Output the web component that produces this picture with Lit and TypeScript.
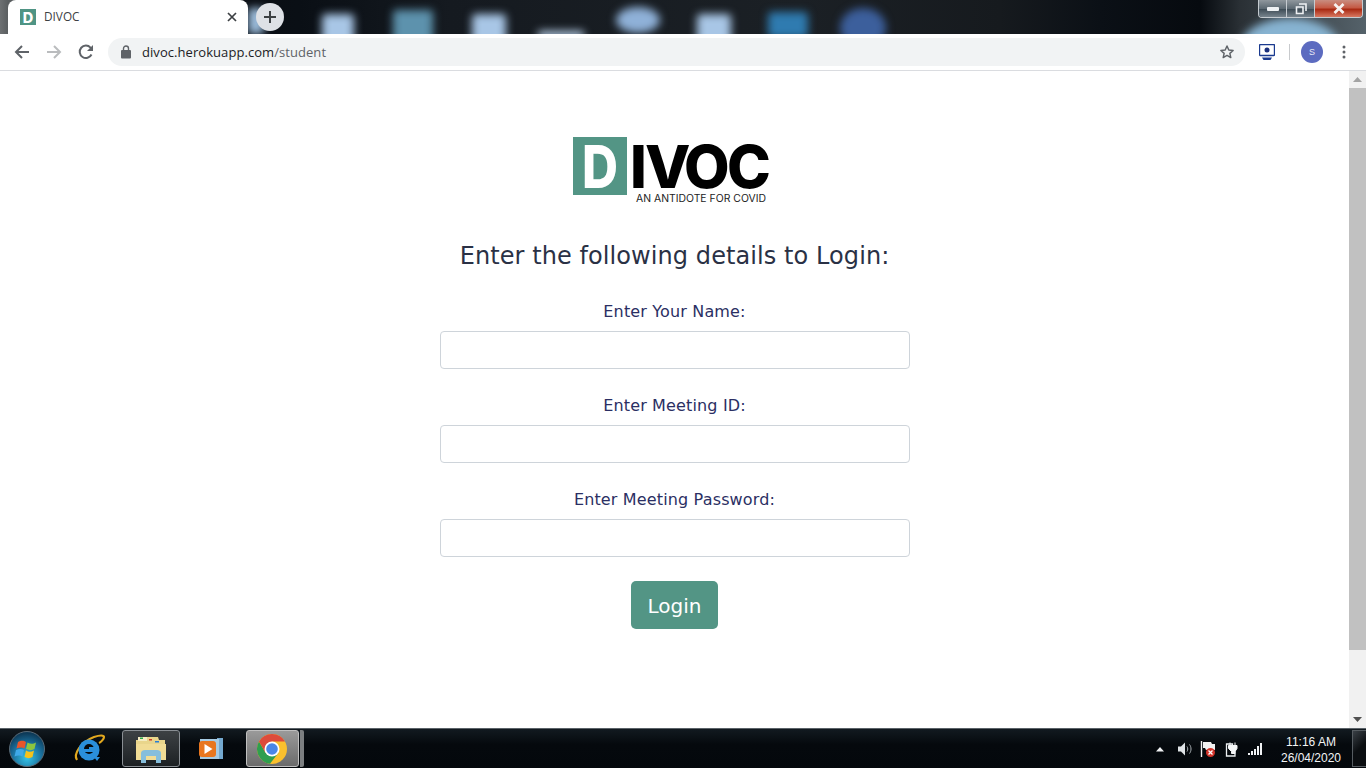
import { LitElement, html, css } from "lit";
import { customElement } from "lit/decorators.js";

@customElement("app-root")
export class AppRoot extends LitElement {
  static styles = css`
    :host { display: flex; flex-direction: column; width: 1366px; height: 768px; overflow: hidden; font-family: "DejaVu Sans", sans-serif; background: #fff; }
    svg { display: block; flex: none; }
    .strip { height: 34px; flex: none; position: relative; overflow: hidden; display: flex; align-items: flex-start;
      background: linear-gradient(90deg, #6d7072 0, #5a5e60 8px, #0a0e14 250px, #0a0f15 300px, #151a20 450px, #1b2025 800px, #161a1e 1000px, #0b1016 1100px, #060a0f 1200px, #2a3035 1240px, #55626a 1366px); }
    .blob { position: absolute; filter: blur(4px); }
    .tab { position: relative; z-index: 1; margin-left: 8px; width: 240px; height: 34px; background: #fff; border-radius: 8px 8px 0 0; display: flex; align-items: center; box-sizing: border-box; padding: 0 11px 0 12px; }
    .tab-title { font: 11.8px "Open Sans", sans-serif; color: #3c4043; margin: 0 0 2px 8px; flex: 1; }
    .newtab { position: relative; z-index: 1; width: 28px; height: 28px; border-radius: 50%; background: #dee1e6; margin: 3px 0 0 8px; display: flex; align-items: center; justify-content: center; }
    .winctl { position: absolute; z-index: 1; right: 3px; top: 0; height: 18px; display: flex; border: 1px solid #c5cbd0; border-top: none; border-radius: 0 0 4px 4px; box-sizing: border-box; overflow: hidden; }
    .wb { height: 17px; display: flex; align-items: center; justify-content: center; background: linear-gradient(#8f979d, #5d6a73 50%, #3f4d57 55%, #77848d); border-right: 1px solid #c5cbd0; width: 27px; }
    .wb.close { width: 47px; border-right: none; background: linear-gradient(#c98d80, #c55a45 45%, #a92a13 55%, #d87861); }
    .toolbar { height: 37px; flex: none; box-sizing: border-box; border-bottom: 1px solid #dadce0; background: #fff; display: flex; align-items: center; padding: 0 0 0 12px; }
    .nav { width: 20px; display: flex; justify-content: center; margin-right: 12px; }
    .omni { width: 1137px; height: 28px; border-radius: 14px; background: #f1f3f4; display: flex; align-items: center; box-sizing: border-box; padding: 0 10px 0 12px; }
    .url { font: 13px "Open Sans", sans-serif; letter-spacing: .06px; color: #202124; margin-left: 10px; flex: 1; }
    .url span { color: #5f6368; }
    .monitor { margin-left: 14px; }
    .sep { width: 1px; height: 16px; background: #c8cacd; margin: 0 11px 0 14px; }
    .avatar { width: 22px; height: 22px; border-radius: 50%; background: #5c6bc0; color: #e8eaf6; font: 9px "Liberation Sans", sans-serif; display: flex; align-items: center; justify-content: center; }
    .dots { margin-left: 19px; }
    .main { flex: 1; display: flex; min-height: 0; }
    .page { flex: 1; display: flex; flex-direction: column; align-items: center; padding-top: 56px; box-sizing: border-box; }
    h1 { margin: 34px 0 0; font-weight: 400; font-size: 24px; letter-spacing: .08px; line-height: 31px; color: #2a3145; }
    form { width: 470px; margin-top: 27px; display: flex; flex-direction: column; align-items: center; }
    .field { width: 100%; display: flex; flex-direction: column; align-items: center; margin-bottom: 24px; }
    label { font-size: 16px; line-height: 26px; margin-bottom: 6px; letter-spacing: .15px; color: #2b2f63; }
    input { width: 100%; height: 38px; box-sizing: border-box; border: 1px solid #ced4da; border-radius: 4px; background: #fff; }
    button { width: 87px; height: 48px; background: #539585; border: none; border-radius: 5px; color: #fff; font: 20px "DejaVu Sans", sans-serif; padding: 2px 0 0; }
    .scroll { width: 17px; flex: none; background: #f1f1f1; display: flex; flex-direction: column; align-items: center; }
    .arrow { height: 17px; flex: none; display: flex; align-items: center; justify-content: center; }
    .thumb { width: 100%; flex: none; height: 562px; background: #c1c1c1; margin-bottom: 61px; }
    .taskbar { height: 40px; flex: none; box-sizing: border-box; border-top: 1px solid #5a6268; background: linear-gradient(#121a20, #05090d 40%, #04080c); display: flex; align-items: stretch; padding-top: 1px; }
    .start { width: 54px; margin-right: 13px; display: flex; align-items: center; justify-content: center; }
    .tb { display: flex; align-items: center; justify-content: center; }
    .tb.ie { width: 44px; margin-right: 11px; }
    .tb.folder { width: 58px; margin-right: 5px; }
    .tb.media { width: 52px; margin-right: 9px; }
    .tb.active { box-sizing: border-box; border: 1px solid #8a8f94; border-radius: 3px; background: linear-gradient(#3d4144, #1d2124); margin-bottom: 1px; }
    .tb.chrome { width: 53px; padding-right: 1px; background: linear-gradient(#9a9a9a, #6b6b6b); border-color: #c0c0c0; }
    .tail { width: 4px; background: #7c7f81; margin: 0 0 1px 1px; border-radius: 0 2px 2px 0; }
    .tray { margin-left: auto; display: flex; align-items: center; gap: 9px; }
    .speaker { margin-left: 4px; }
    .flag { margin-left: -2px; }
    .power { margin-left: -1px; }
    .clock { font: 12px/16px "Liberation Sans", sans-serif; color: #f2f4f5; text-align: center; width: 62px; margin: 1px 1px 0 8px; }
    .show { width: 14px; align-self: stretch; box-sizing: border-box; border: 1px solid #565c61; border-right: none; background: linear-gradient(135deg, #3a4046, #0b0e11 50%); margin-bottom: 1px; }
  `;

  private favicon() {
    return html`<svg width="16" height="16" viewBox="0 0 16 16"><rect width="16" height="16" fill="#4f9484"/><text x="8" y="13.500" text-anchor="middle" font-family="Inter" font-weight="800" font-size="14.500" fill="#fff">D</text></svg>`;
  }

  private logo() {
    return html`<svg width="204" height="80" viewBox="0 -10 204 80">
      <rect x="0" y="0" width="54" height="58" fill="#539585"/>
      <text x="9" y="51" font-family="Inter" font-weight="800" font-size="59" textLength="36" lengthAdjust="spacingAndGlyphs" fill="#fff">D</text>
      <text x="57 72 111 154" y="51" font-family="Inter" font-weight="800" font-size="59" fill="#000">IVOC</text>
      <text x="63" y="65" font-family="Inter" font-weight="400" font-size="10" textLength="130" lengthAdjust="spacingAndGlyphs" fill="#222">AN ANTIDOTE FOR COVID</text>
    </svg>`;
  }

  private blobs() {
    const items = [
      [322, 14, 32, 34, "#a8c6e6", "4px"], [393, 10, 40, 34, "#5d92ad", "3px"], [472, 14, 34, 34, "#a8c6e6", "4px"],
      [538, 31, 46, 8, "#b8cfe8", "2px"], [616, 7, 44, 26, "#8fb1d8", "50%"], [697, 14, 34, 34, "#a8c6e6", "4px"],
      [768, 12, 40, 26, "#2f7bb0", "4px"], [840, 8, 46, 40, "#3c5f9c", "50%"], [248, 8, 16, 26, "#9cbddc", "2px"],
      [1240, 18, 100, 60, "#87b3d1", "50%"],
    ] as const;
    return items.map(([l, t, w, h, c, r]) => html`<div class="blob" style="left:${l}px;top:${t}px;width:${w}px;height:${h}px;background:${c};border-radius:${r}"></div>`);
  }

  render() {
    return html`
      <div class="strip">
        ${this.blobs()}
        <div class="tab">
          ${this.favicon()}
          <span class="tab-title">DIVOC</span>
          <svg width="10" height="10" viewBox="0 0 10 10"><path d="M1 1l8 8M9 1l-8 8" stroke="#3c4043" stroke-width="1.700"/></svg>
        </div>
        <div class="newtab"><svg width="14" height="14" viewBox="0 0 14 14"><path d="M7 1v12M1 7h12" stroke="#3c4043" stroke-width="2"/></svg></div>
        <div class="winctl">
          <div class="wb"><svg width="12" height="6" viewBox="0 0 12 6"><rect y="1" width="12" height="4" rx="1" fill="#eef1f3"/></svg></div>
          <div class="wb"><svg width="12" height="12" viewBox="0 0 12 12"><path d="M4 1h7v7M1.500 4h6.500v6.500H1.500z" fill="none" stroke="#eef1f3" stroke-width="1.600"/></svg></div>
          <div class="wb close"><svg width="12" height="11" viewBox="0 0 12 11"><path d="M1.500 1l9 9M10.500 1l-9 9" stroke="#f6f1ef" stroke-width="2.800"/></svg></div>
        </div>
      </div>
      <div class="toolbar">
        <div class="nav"><svg width="16" height="14" viewBox="0 0 16 14"><path d="M15 7H2M8 1L2 7l6 6" fill="none" stroke="#5f6368" stroke-width="2"/></svg></div>
        <div class="nav"><svg width="16" height="14" viewBox="0 0 16 14"><path d="M1 7h13M8 1l6 6-6 6" fill="none" stroke="#babcbe" stroke-width="2"/></svg></div>
        <div class="nav"><svg width="16" height="16" viewBox="0 0 16 16"><path d="M13.500 10.500A6.200 6.200 0 1 1 12.500 3.600L14.500 5.500" fill="none" stroke="#5f6368" stroke-width="2"/><path d="M15 1v6H9z" fill="#5f6368"/></svg></div>
        <div class="omni">
          <svg width="12" height="14" viewBox="0 0 12 14"><rect x="1" y="5" width="10" height="8.500" rx="1" fill="#5f6368"/><path d="M3.500 5.500V3.500a2.500 2.500 0 0 1 5 0v2" fill="none" stroke="#5f6368" stroke-width="1.400"/></svg>
          <div class="url">divoc.herokuapp.com<span>/student</span></div>
          <svg width="16" height="16" viewBox="0 0 24 24"><path d="M12 3l2.700 6 6.500.700-4.900 4.300 1.400 6.400L12 17.100 6.300 20.400l1.400-6.400-4.900-4.300 6.500-.700z" fill="none" stroke="#5f6368" stroke-width="2.200" stroke-linejoin="round"/></svg>
        </div>
        <svg class="monitor" width="16" height="16" viewBox="0 0 16 16"><rect x=".5" y=".5" width="15" height="11" rx="1" fill="#fff" stroke="#1a3a8f" stroke-width="1.400"/><circle cx="8" cy="6" r="2.500" fill="#1a2f7c"/><path d="M3 13.500h10L11.500 16h-7z" fill="#1a3a8f"/></svg>
        <div class="sep"></div>
        <div class="avatar">S</div>
        <svg class="dots" width="4" height="14" viewBox="0 0 4 14"><circle cx="2" cy="2" r="1.500" fill="#5f6368"/><circle cx="2" cy="7" r="1.500" fill="#5f6368"/><circle cx="2" cy="12" r="1.500" fill="#5f6368"/></svg>
      </div>
      <div class="main">
        <div class="page">
          ${this.logo()}
          <h1>Enter the following details to Login:</h1>
          <form @submit=${(e: Event) => e.preventDefault()}>
            <div class="field"><label>Enter Your Name:</label><input type="text" /></div>
            <div class="field"><label>Enter Meeting ID:</label><input type="text" /></div>
            <div class="field"><label>Enter Meeting Password:</label><input type="password" /></div>
            <button type="submit">Login</button>
          </form>
        </div>
        <div class="scroll">
          <div class="arrow"><svg width="9" height="5" viewBox="0 0 9 5"><path d="M4.500 0L9 5H0z" fill="#a3a3a3"/></svg></div>
          <div class="thumb"></div>
          <div class="arrow"><svg width="9" height="5" viewBox="0 0 9 5"><path d="M0 0h9L4.500 5z" fill="#505050"/></svg></div>
        </div>
      </div>
      <div class="taskbar">
        <div class="start">
          <svg width="38" height="36" viewBox="0 0 38 36">
            <defs><radialGradient id="orb" cx=".5" cy=".75" r=".7"><stop offset="0" stop-color="#35c4e8"/><stop offset=".6" stop-color="#1a6f9c"/><stop offset="1" stop-color="#0d3a58"/></radialGradient></defs>
            <circle cx="19" cy="18" r="17.500" fill="url(#orb)" stroke="#5a6a76"/>
            <path d="M10 11c3-2 6-1.500 8 0l-1.500 6.500c-2-1.500-5-1.500-8 0z" fill="#e8552a"/>
            <path d="M19.500 11.500c3 2 6 1.500 8.500 0L26.500 18c-2.500 1.500-5 1.500-8.500 0z" fill="#8cc63f"/>
            <path d="M8 19c3-1.500 6-1.500 8 0l-1.500 6.500c-2-1.500-5-1.500-8 0z" fill="#3fa9e8"/>
            <path d="M18 19.500c3 2 5.500 1.500 8 0L24.500 26c-2.500 1.500-5 1.500-8 0z" fill="#f5c21b"/>
          </svg>
        </div>
        <div class="tb ie">
          <svg width="34" height="32" viewBox="0 0 34 32">
            <path d="M5 27C1 21 9 9 22 4c6-2 10-2 10 0 0 2-3 5-5 6" fill="none" stroke="#e2a81e" stroke-width="2.200"/>
            <circle cx="17" cy="17" r="10.500" fill="#2a8fdc"/><circle cx="17" cy="16" r="5" fill="#06090d"/>
            <path d="M11 16h13v3H11z" fill="#2a8fdc"/><path d="M17 16h7v-2h-7z" fill="#2a8fdc"/>
            <path d="M22 24l6 0-3 4z" fill="#2a8fdc"/>
          </svg>
        </div>
        <div class="tb folder active">
          <svg width="32" height="30" viewBox="0 0 32 30">
            <path d="M1 6h10l1-3h11l1 3h6v20H1z" fill="#e9d58b"/><path d="M3 3h9v4H3z" fill="#f4ecc2"/><rect x="5" y="3.500" width="3" height="1.500" fill="#2aa84a"/><rect x="14" y="5" width="3" height="1.500" fill="#d43b2c"/><rect x="20" y="7" width="4" height="1.500" fill="#2a7ed4"/>
            <path d="M1 10h30v16H1z" fill="#f1dc95"/><path d="M6 29V19c0-2 2-3 4-3h12c2 0 4 1 4 3v10h-5v-7H11v7z" fill="#86bedc"/>
          </svg>
        </div>
        <div class="tb media">
          <svg width="28" height="26" viewBox="0 0 28 26">
            <path d="M20 2h6v21h-6z" fill="#74a9d0"/><path d="M3 3h19v20H3z" fill="#a6cbe4"/><rect x="2" y="5" width="17" height="16" rx="3" fill="#e8761f"/>
            <path d="M7.500 8l8 5-8 5z" fill="#fff"/>
          </svg>
        </div>
        <div class="tb chrome active">
          <svg width="30" height="30" viewBox="0 0 30 30">
            <circle cx="15" cy="15" r="15" fill="#fbc02d"/>
            <path d="M2 7.500A15 15 0 0 0 13 29.870L21.500 18.750 8.500 18.750z" fill="#2f9e4f"/>
            <path d="M15 0A15 15 0 0 1 28 7.500H15L8.500 18.750 2 7.500A15 15 0 0 1 15 0z" fill="#dd4b3c"/>
            <circle cx="15" cy="15" r="7.500" fill="#fff"/><circle cx="15" cy="15" r="5.800" fill="#4a86e8"/>
          </svg>
        </div>
        <div class="tail"></div>
        <div class="tray">
          <svg width="8" height="5" viewBox="0 0 8 5"><path d="M4 0l4 4.500H0z" fill="#f0f2f4"/></svg>
          <svg class="speaker" width="16" height="16" viewBox="0 0 16 16"><path d="M1 5.500h3L8 1.500v13l-4-4H1z" fill="#dfe3e6"/><path d="M10 5.500c1 1.500 1 3.500 0 5M12.500 3.500c2 2.500 2 6.500 0 9" fill="none" stroke="#a9b0b5" stroke-width="1"/></svg>
          <svg class="flag" width="16" height="18" viewBox="0 0 16 18"><path d="M1.500 1v16" stroke="#f2f2f2" stroke-width="1.400"/><path d="M3 2h8l1 2h3v6H6l-1-2H3z" fill="#f2f2f2"/><circle cx="10.500" cy="12.500" r="4.500" fill="#d4342a"/><path d="M8.500 10.500l4 4M12.500 10.500l-4 4" stroke="#fff" stroke-width="1.300"/></svg>
          <svg class="power" width="15" height="16" viewBox="0 0 15 16"><path d="M2.500 3h6v3H11v9H2.500z" fill="none" stroke="#eceff1" stroke-width="1.300"/><path d="M6 1.500v3M11 1.500v3M4.500 4.500H13V7.500l-2 3v2H7.500v-2l-3-3z" stroke="#f5f7f8" stroke-width="1" fill="#f5f7f8"/></svg>
          <svg width="15" height="12" viewBox="0 0 15 12"><rect x="0" y="10" width="2" height="2" fill="#f0f2f4"/><rect x="3" y="8" width="2" height="4" fill="#f0f2f4"/><rect x="6" y="6" width="2" height="6" fill="#f0f2f4"/><rect x="9" y="3" width="2" height="9" fill="#f0f2f4"/><rect x="12" y="0" width="2" height="12" fill="#f0f2f4"/></svg>
          <div class="clock">11:16 AM<br />26/04/2020</div>
          <div class="show"></div>
        </div>
      </div>
    `;
  }
}
